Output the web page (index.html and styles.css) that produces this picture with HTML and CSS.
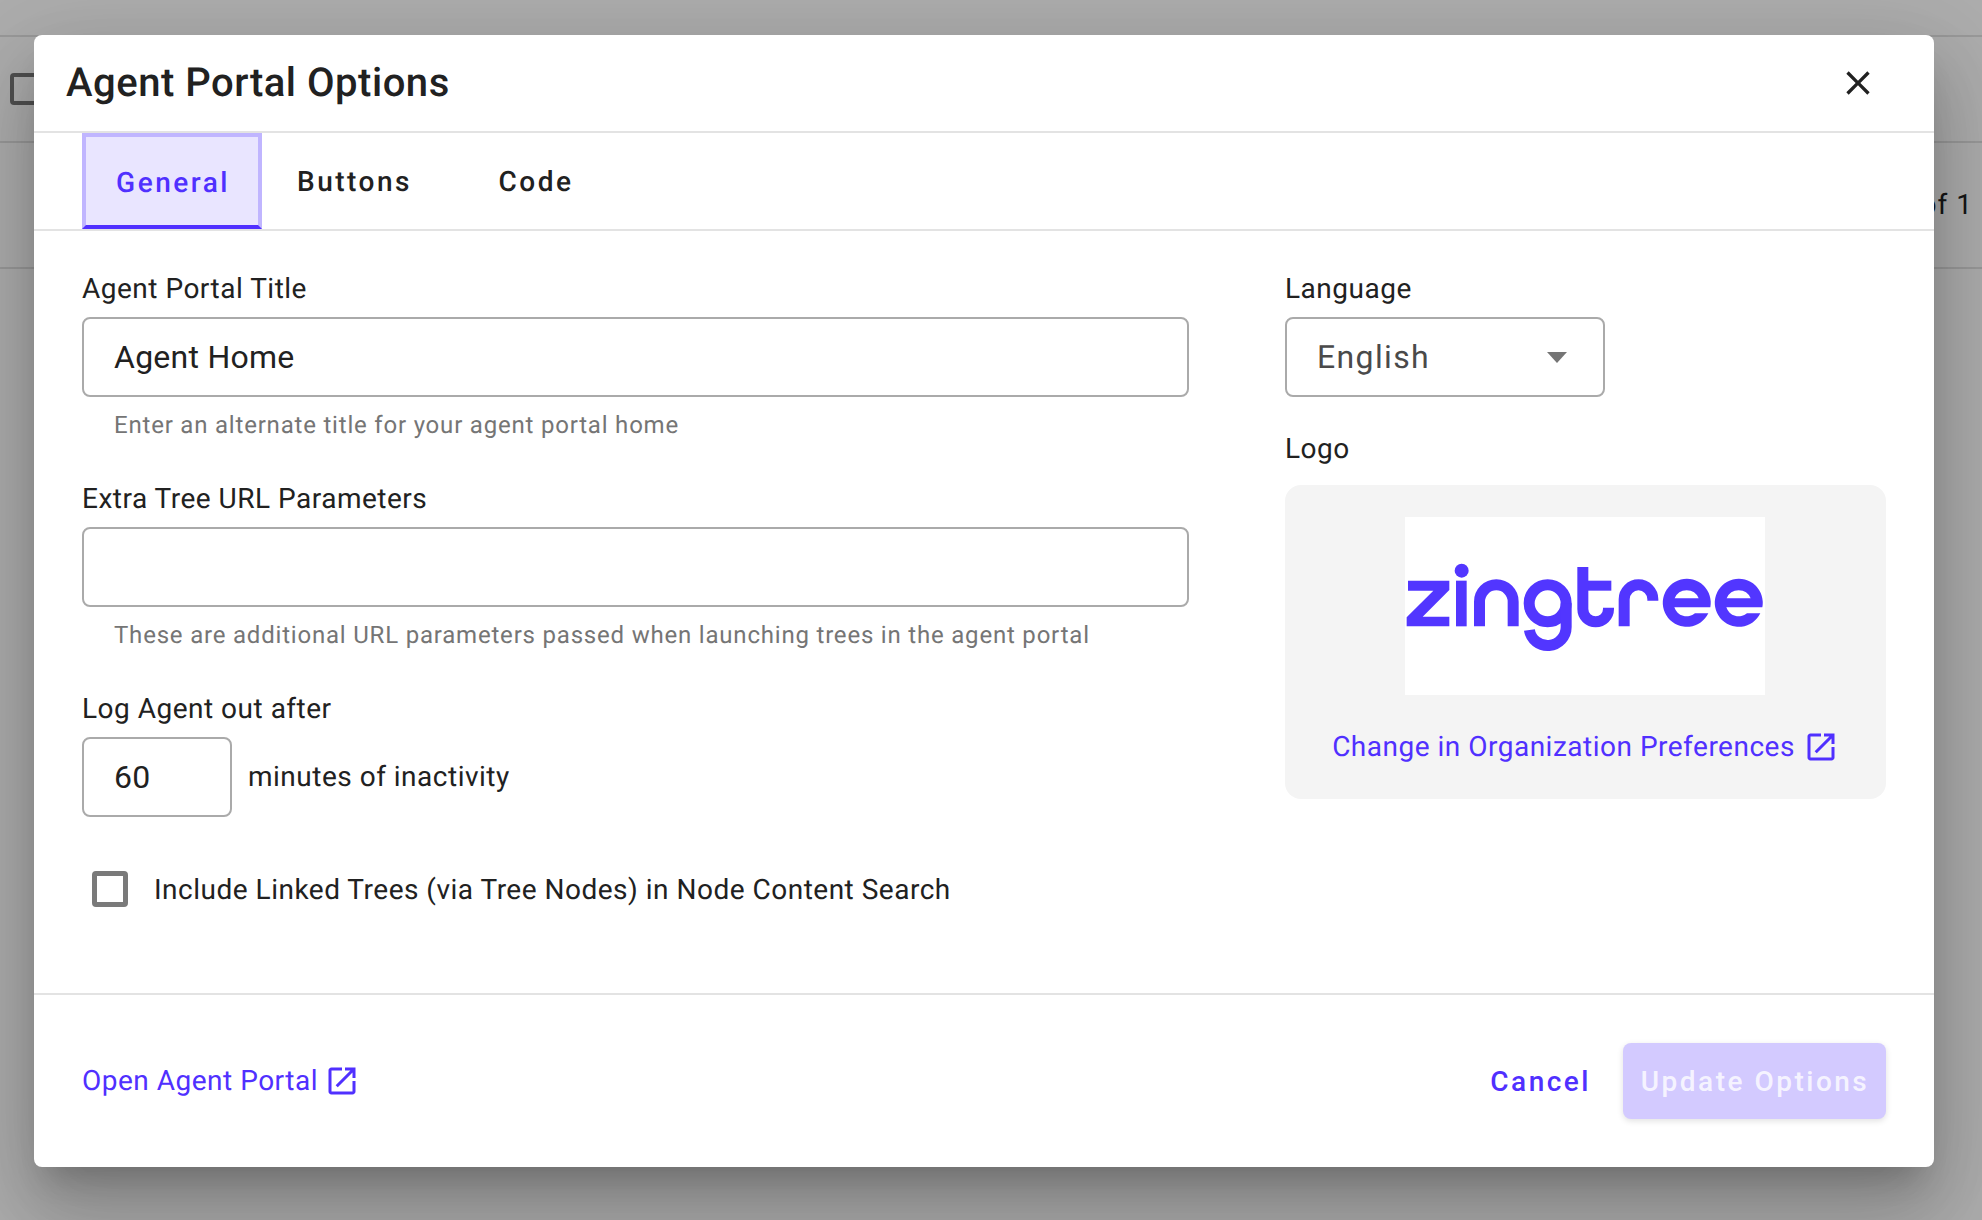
FILE: index.html
```html
<!DOCTYPE html>
<html lang="en">
<head>
<meta charset="utf-8">
<title>Agent Portal Options</title>
<link rel="stylesheet" href="styles.css">
</head>
<body>
<div class="page">
  <div class="page-row page-row-top"></div>
  <div class="page-row page-row-head"><span class="page-check"></span></div>
  <div class="page-row page-row-pager"><span class="pager">1 of 1</span></div>
</div>
<div class="overlay"></div>
<div class="modal">
  <header class="modal-head">
    <h1 class="modal-title">Agent Portal Options</h1>
    <button class="close" aria-label="Close">
      <svg viewBox="0 0 24 24" class="close-icon"><path d="M19 6.41 17.59 5 12 10.59 6.41 5 5 6.41 10.59 12 5 17.59 6.41 19 12 13.41 17.59 19 19 17.59 13.41 12z"/></svg>
    </button>
  </header>
  <nav class="tabs">
    <div class="tab tab-active">General</div>
    <div class="tab">Buttons</div>
    <div class="tab tab-code">Code</div>
  </nav>
  <main class="modal-body">
    <section class="col-left">
      <div class="field">
        <label class="label">Agent Portal Title</label>
        <input class="input" value="Agent Home">
        <p class="helper">Enter an alternate title for your agent portal home</p>
      </div>
      <div class="field">
        <label class="label">Extra Tree URL Parameters</label>
        <input class="input" value="">
        <p class="helper">These are additional URL parameters passed when launching trees in the agent portal</p>
      </div>
      <div class="field">
        <label class="label">Log Agent out after</label>
        <div class="timeout">
          <input class="input input-small" value="60">
          <span class="timeout-text">minutes of inactivity</span>
        </div>
      </div>
      <div class="check-row">
        <span class="checkbox"></span>
        <span class="check-label">Include Linked Trees (via Tree Nodes) in Node Content Search</span>
      </div>
    </section>
    <section class="col-right">
      <label class="label">Language</label>
      <div class="select">
        <span>English</span>
        <svg class="select-arrow" viewBox="0 0 20 11"><polygon points="0,0 20,0 10,11"/></svg>
      </div>
      <label class="label label-logo">Logo</label>
      <div class="logo-box">
        <svg class="logo" viewBox="15 21 1080 534" role="img" aria-label="zingtree">
          <rect x="15" y="21" width="1080" height="534" fill="#fff"/>
          <g fill="#5236ff">
            <polygon points="24,212 148,212 148,240 68,320 148,320 148,349 20,349 20,322 100,242 24,242"/>
            <rect x="168" y="212" width="32" height="137"/>
            <circle cx="185" cy="182" r="21"/>
            <rect x="548" y="212" width="86" height="30"/>
            <path fill-rule="evenodd" d="M925 310A72 72 0 1 1 931 292H823A39 39 0 0 0 885 310ZM824 265A39 39 0 0 1 896 265Z"/>
            <path fill-rule="evenodd" d="M1081 310A72 72 0 1 1 1087 292H979A39 39 0 0 0 1041 310ZM980 265A39 39 0 0 1 1052 265Z"/>
          </g>
          <g fill="none" stroke="#5236ff" stroke-width="33">
            <path d="M238.5 349V275A50.5 50.5 0 0 1 339.5 275V349"/>
            <circle cx="443" cy="280" r="55.5"/>
            <path d="M498.5 280V351A55.5 55.5 0 0 1 388.2 360"/>
            <path d="M548.5 171V297A38.5 38.5 0 0 0 625.5 297V293"/>
            <path d="M672.5 349V267.5A43 43 0 0 1 758.5 267.5V272"/>
          </g>
        </svg>
        <a class="link logo-link" href="#">Change in Organization Preferences
          <svg class="ext-icon" viewBox="0 0 24 24"><path d="M19 19H5V5h7V3H5c-1.11 0-2 .9-2 2v14c0 1.1.89 2 2 2h14c1.1 0 2-.9 2-2v-7h-2v7zM14 3v2h3.59l-9.83 9.83 1.41 1.41L19 6.41V10h2V3h-7z"/></svg>
        </a>
      </div>
    </section>
  </main>
  <footer class="modal-foot">
    <a class="link" href="#">Open Agent Portal
      <svg class="ext-icon" viewBox="0 0 24 24"><path d="M19 19H5V5h7V3H5c-1.11 0-2 .9-2 2v14c0 1.1.89 2 2 2h14c1.1 0 2-.9 2-2v-7h-2v7zM14 3v2h3.59l-9.83 9.83 1.41 1.41L19 6.41V10h2V3h-7z"/></svg>
    </a>
    <div class="foot-actions">
      <button class="btn btn-text">Cancel</button>
      <button class="btn btn-primary">Update Options</button>
    </div>
  </footer>
</div>
</body>
</html>
```

FILE: styles.css
```css
* { box-sizing: border-box; }
html, body { margin: 0; height: 100%; }
body {
  width: 1982px;
  height: 1220px;
  overflow: hidden;
  position: relative;
  background: #fff;
  font-family: Roboto, "Liberation Sans", sans-serif;
  color: #212121;
  text-rendering: geometricPrecision;
}
.page-row { border-bottom: 2px solid #e2e2e2; }
.page-row-top { height: 37px; }
.page-row-head { height: 106px; padding: 36px 0 0 10px; }
.page-check {
  display: block;
  width: 32px;
  height: 32px;
  border: 4px solid #777;
  border-radius: 4px;
}
.page-row-pager {
  height: 126px;
  padding: 45px 9px 0 0;
  text-align: right;
  font-size: 28px;
  line-height: 34px;
  letter-spacing: 1px;
}
.overlay {
  position: absolute;
  inset: 0;
  background: rgba(0, 0, 0, .32);
}
.modal {
  position: absolute;
  left: 34px;
  top: 35px;
  width: 1900px;
  height: 1132px;
  display: flex;
  flex-direction: column;
  background: #fff;
  border-radius: 8px;
  box-shadow: 0 22px 30px -14px rgba(0,0,0,.2), 0 48px 76px 6px rgba(0,0,0,.14), 0 24px 92px 16px rgba(0,0,0,.12);
}
.modal-head {
  height: 98px;
  flex: none;
  display: flex;
  align-items: center;
  justify-content: space-between;
  padding: 0 56px 0 32px;
  border-bottom: 2px solid #e3e3e3;
}
.modal-title {
  margin: 0;
  font-size: 40px;
  font-weight: 500;
  line-height: 48px;
  letter-spacing: .52px;
}
.close {
  width: 40px;
  height: 40px;
  padding: 0;
  border: 0;
  background: none;
}
.close-icon { display: block; width: 40px; height: 40px; fill: #212121; }
.tabs {
  height: 98px;
  flex: none;
  display: flex;
  padding: 0 48px;
  border-bottom: 2px solid #e3e3e3;
}
.tab {
  min-width: 180px;
  padding: 0 35px;
  display: flex;
  align-items: center;
  justify-content: center;
  font-size: 28px;
  font-weight: 500;
  letter-spacing: 2.5px;
}
.tab-code { padding-right: 37px; }
.tab-active {
  padding: 2px 28px 0 30px;
  background: #e9e5ff;
  color: #5030ff;
  border: 4px solid #c0b5ff;
  border-bottom-color: #5030ff;
}
.modal-body {
  flex: 1;
  display: grid;
  grid-template-columns: 1107px 601px;
  column-gap: 96px;
  padding: 40px 48px 0;
}
.label {
  display: block;
  font-size: 28px;
  line-height: 36px;
  letter-spacing: .5px;
}
.field + .field { margin-top: 40px; }
.input {
  display: block;
  width: 100%;
  height: 80px;
  margin-top: 10px;
  padding: 0 30px;
  border: 2px solid #aaa;
  border-radius: 8px;
  background: #fff;
  font: 400 32px Roboto, "Liberation Sans", sans-serif;
  letter-spacing: .25px;
  color: #212121;
  outline: 0;
}
.helper {
  margin: 12px 0 0;
  padding-left: 32px;
  font-size: 24px;
  line-height: 32px;
  letter-spacing: .8px;
  color: #757575;
}
.timeout { display: flex; align-items: center; margin-top: 10px; }
.input-small { width: 150px; margin-top: 0; }
.timeout-text {
  margin-left: 16px;
  padding-bottom: 2px;
  font-size: 28px;
  letter-spacing: .5px;
}
.check-row {
  display: flex;
  align-items: center;
  margin-top: 54px;
  padding-left: 10px;
}
.checkbox {
  width: 36px;
  height: 36px;
  flex: none;
  border: 5px solid #7a7a7a;
  border-radius: 4px;
}
.check-label {
  margin-left: 26px;
  font-size: 28px;
  letter-spacing: .5px;
}
.select {
  width: 320px;
  height: 80px;
  margin-top: 10px;
  padding: 0 36px 0 30px;
  display: flex;
  align-items: center;
  justify-content: space-between;
  border: 2px solid #aaa;
  border-radius: 8px;
  font-size: 32px;
  letter-spacing: 1.35px;
  color: #4a4a4a;
}
.select-arrow { width: 20px; height: 11px; fill: #757575; }
.label-logo { margin-top: 34px; }
.logo-box {
  margin-top: 18px;
  height: 314px;
  padding-top: 32px;
  display: flex;
  flex-direction: column;
  align-items: center;
  background: #f4f4f4;
  border-radius: 16px;
}
.logo { display: block; width: 360px; height: 178px; margin-left: -1px; }
.link {
  display: inline-flex;
  align-items: center;
  gap: 6px;
  font-size: 28px;
  line-height: 34px;
  letter-spacing: .5px;
  color: #5030ff;
  text-decoration: none;
}
.logo-link { margin-top: 34px; gap: 8px; }
.ext-icon { width: 36px; height: 36px; flex: none; fill: #5030ff; }
.modal-foot {
  flex: none;
  height: 174px;
  display: flex;
  align-items: center;
  justify-content: space-between;
  padding: 0 48px;
  border-top: 2px solid #e3e3e3;
}
.foot-actions { display: flex; align-items: center; gap: 32px; }
.btn {
  border: 0;
  font: 500 28px Roboto, "Liberation Sans", sans-serif;
  letter-spacing: 2.5px;
  background: none;
  padding: 0;
}
.btn-text { color: #5030ff; }
.btn-primary {
  width: 263px;
  height: 76px;
  padding-left: 1px;
  background: #d3caff;
  color: rgba(255, 255, 255, .8);
  border-radius: 8px;
  box-shadow: 0 2px 6px rgba(0, 0, 0, .12);
}
```
